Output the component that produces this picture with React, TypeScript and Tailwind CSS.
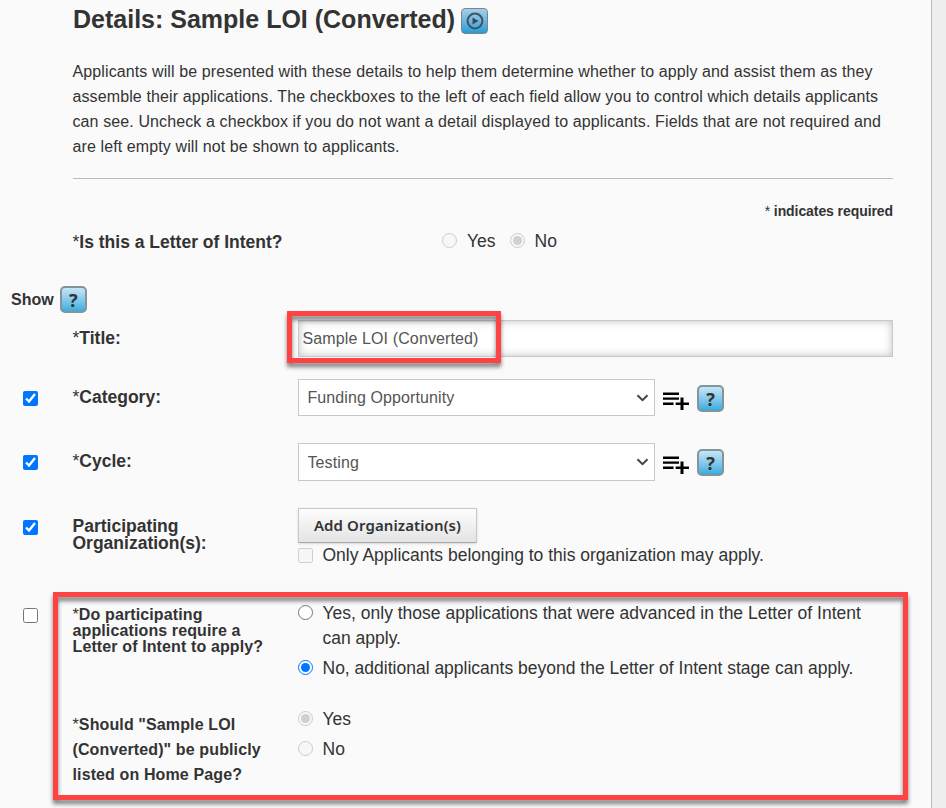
import React from 'react';

const HelpIcon: React.FC = () => (
  <span className="flex h-[27px] w-[27px] shrink-0 items-center justify-center rounded-[5px] border-2 border-[#87939a] bg-gradient-to-b from-[#c5e6f5] to-[#35ade0] font-['Noto_Sans',sans-serif] text-[18px] leading-none font-bold text-[#333]">
    ?
  </span>
);

const PlayIcon: React.FC = () => (
  <span className="flex h-[26px] w-[27px] shrink-0 items-center justify-center rounded-[4px] border border-[#78878e] bg-gradient-to-b from-[#a3cfe6] to-[#1e9cd8]">
    <svg width="18" height="18" viewBox="0 0 18 18" fill="none">
      <circle cx="9" cy="9" r="7.4" stroke="#3f5460" strokeWidth="2" />
      <path d="M6.5 5.5v7l6-3.5z" fill="#3c4b53" />
    </svg>
  </span>
);

const ListAddIcon: React.FC = () => (
  <svg className="mt-[12px] h-[20px] w-[26px] shrink-0" viewBox="0 0 26 20" fill="#000">
    <path d="M0 1.5h16v2.4H0zM0 6.4h16v2.4H0zM0 11.6h10.5v2.4H0zM17.5 6.4h3v5.2H26v2.4h-5.5v5h-3v-5h-4.8v-2.4h4.8z" />
  </svg>
);

const Star: React.FC = () => <span className="font-normal">*</span>;

type SelectProps = { value: string; height: string };

const SelectRow: React.FC<SelectProps> = ({ value, height }) => (
  <div className="flex items-start">
    <div className={`relative w-[357px] ${height}`}>
      <select
        className="h-full w-full appearance-none border border-[#c8c8c8] bg-white px-[8.5px] text-[16px] tracking-[0.1px] text-[#555] outline-none"
        defaultValue={value}
      >
        <option>{value}</option>
      </select>
      <svg className="absolute top-1/2 right-[6px] -mt-1" width="13" height="8" viewBox="0 0 13 8" fill="none">
        <path d="M1.5 1.2l5 5 5-5" stroke="#444" strokeWidth="2" />
      </svg>
    </div>
    <div className="ml-2 flex items-start gap-2">
      <ListAddIcon />
      <div className="mt-[6px]">
        <HelpIcon />
      </div>
    </div>
  </div>
);

export default function App() {
  return (
    <div className="flex h-[808px] w-[946px] overflow-hidden bg-[#eee] font-['Liberation_Sans',Arial,sans-serif] text-[#333]">
      <main className="relative w-[932px] shrink-0 border-r border-[#bbb] bg-[#fafafa]">
        <header className="ml-[73px] flex h-[59px] gap-[6px] pt-[5px]">
          <h1 className="text-[25px] leading-[29px] font-bold">Details: Sample LOI (Converted)</h1>
          <div className="pt-[3px]">
            <PlayIcon />
          </div>
        </header>

        <p className="ml-[72.5px] h-[119px] text-[16px] leading-[25px] tracking-[0.11px] whitespace-nowrap">
          Applicants will be presented with these details to help them determine whether to apply and assist them as they
          <br />
          assemble their applications. The checkboxes to the left of each field allow you to control which details applicants
          <br />
          can see. Uncheck a checkbox if you do not want a detail displayed to applicants. Fields that are not required and
          <br />
          are left empty will not be shown to applicants.
        </p>
        <hr className="mr-[38px] ml-[73px] border-[#bbb]" />
        <p className="mr-[38px] h-[50px] pt-6 text-right text-[14px] leading-4 font-bold tracking-[-0.08px]">
          <Star /> indicates required
        </p>

        <div className="ml-[72.5px] flex h-[57px] text-[17.5px] leading-6">
          <div className="w-[369.5px] pt-px font-bold">
            <Star />Is this a Letter of Intent?
          </div>
          <label className="flex h-6 items-center gap-[10px]">
            <input type="radio" name="loi" disabled className="-mt-[2px] h-[15px] w-[15px]" />
            Yes
          </label>
          <label className="ml-[14px] flex h-6 items-center gap-[10px]">
            <input type="radio" name="loi" disabled defaultChecked className="-mt-[2px] h-[15px] w-[15px]" />
            No
          </label>
        </div>

        <div className="ml-[11px] flex h-[34px] items-start gap-[6px]">
          <span className="text-[16px] leading-[28px] font-bold">Show</span>
          <HelpIcon />
        </div>

        <div className="ml-[72.5px] flex h-[59px] text-[17.5px]">
          <div className="w-[225.5px] pt-[7px] leading-[22px] font-bold">
            <Star />Title:
          </div>
          <input
            className="h-[37px] w-[595px] border border-[#c8c8c8] bg-white px-[3.5px] text-[16px] tracking-[0.12px] text-[#555] shadow-[inset_0_0_8px_rgba(0,0,0,0.25)] outline-none"
            defaultValue="Sample LOI (Converted)"
          />
        </div>

        <div className="flex h-16 pl-[23px] text-[17.5px]">
          <input type="checkbox" defaultChecked className="mt-3 h-[15px] w-[15px]" />
          <div className="ml-[34.5px] w-[225.5px] pt-[7px] leading-[22px] font-bold">
            <Star />Category:
          </div>
          <SelectRow value="Funding Opportunity" height="h-[37px]" />
        </div>

        <div className="flex h-[65px] pl-[23px] text-[17.5px]">
          <input type="checkbox" defaultChecked className="mt-3 h-[15px] w-[15px]" />
          <div className="ml-[34.5px] w-[225.5px] pt-[7px] leading-[22px] font-bold">
            <Star />Cycle:
          </div>
          <SelectRow value="Testing" height="h-[38px] [&>select]:pt-px" />
        </div>

        <div className="flex h-[93px] pl-[23px] text-[17.5px]">
          <input type="checkbox" defaultChecked className="mt-3 h-[15px] w-[15px]" />
          <div className="ml-[34.5px] w-[225.5px] pt-[10px] leading-[17px] font-bold">
            Participating
            <br />
            Organization(s):
          </div>
          <div>
            <button className="h-[35px] w-[179px] border border-[#c8c8c8] border-b-[#aaa] bg-gradient-to-b from-[#fdfdfd] to-[#e4e4e4] font-['Noto_Sans',sans-serif] text-[15px] font-semibold tracking-[0.1px] shadow-sm">
              Add Organization(s)
            </button>
            <label className="flex h-6 items-center gap-[9.5px]">
              <input type="checkbox" disabled className="mt-px h-[15px] w-[15px]" />
              Only Applicants belonging to this organization may apply.
            </label>
          </div>
        </div>

        <div className="flex h-[110px] pl-[23px] text-[17.5px]">
          <input type="checkbox" className="mt-[7px] h-[15px] w-[15px]" />
          <div className="ml-[34.5px] w-[225.5px] pt-[6px] text-[16px] leading-4 font-bold tracking-[0.12px]">
            <Star />Do participating
            <br />
            applications require a
            <br />
            Letter of Intent to apply?
          </div>
          <div className="leading-[25px] whitespace-nowrap">
            <label className="flex items-start gap-[9.5px]">
              <input type="radio" name="advance" className="mt-1 h-[15px] w-[15px]" />
              <span>
                Yes, only those applications that were advanced in the Letter of Intent
                <br />
                can apply.
              </span>
            </label>
            <label className="mt-[5px] flex items-start gap-[9.5px]">
              <input type="radio" name="advance" defaultChecked className="mt-1 h-[15px] w-[15px]" />
              No, additional applicants beyond the Letter of Intent stage can apply.
            </label>
          </div>
        </div>

        <div className="ml-[72.5px] flex leading-[25px]">
          <div className="w-[225.5px] pt-px text-[16px] font-bold tracking-[0.12px]">
            <Star />Should "Sample LOI
            <br />
            (Converted)" be publicly
            <br />
            listed on Home Page?
          </div>
          <div className="-mt-[4px] text-[17.5px]">
            <label className="flex items-center gap-[9.5px]">
              <input type="radio" name="listed" disabled defaultChecked className="-mt-[2px] h-[15px] w-[15px]" />
              Yes
            </label>
            <label className="mt-[5px] flex items-center gap-[9.5px]">
              <input type="radio" name="listed" disabled className="-mt-[2px] h-[15px] w-[15px]" />
              No
            </label>
          </div>
        </div>

        {/* Callouts */}
        <div className="pointer-events-none absolute top-[311px] left-[287px] h-[52px] w-[214px] border-5 border-[#ff4343] drop-shadow-[0_4px_2px_rgba(0,0,0,0.5)]" />
        <div className="pointer-events-none absolute top-[592px] left-[53px] h-[208px] w-[855px] border-5 border-[#ff4343] drop-shadow-[0_4px_2px_rgba(0,0,0,0.5)]" />
      </main>
    </div>
  );
}
